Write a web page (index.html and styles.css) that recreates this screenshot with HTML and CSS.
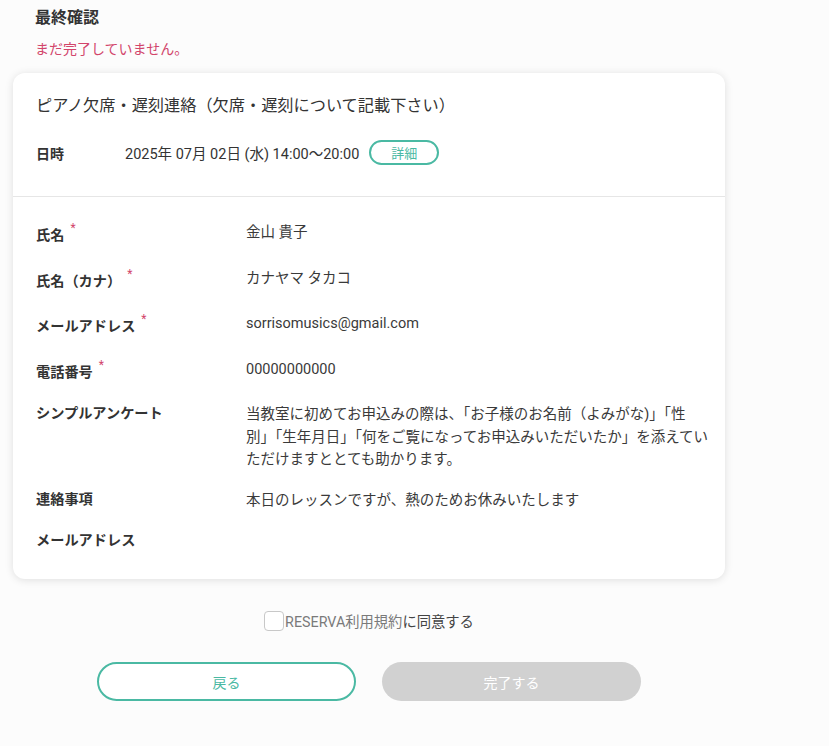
FILE: index.html
```html
<!DOCTYPE html>
<html lang="ja">
<head>
<meta charset="utf-8">
<link rel="stylesheet" href="styles.css">
</head>
<body>
<div class="page">
  <div class="intro">
    <h1 class="page-title">最終確認</h1>
    <p class="notice">まだ完了していません。</p>
  </div>
  <section class="card">
    <div class="card-head">
      <h2 class="event-title">ピアノ欠席・遅刻連絡（欠席・遅刻について記載下さい）</h2>
      <div class="when">
        <span class="when-label">日時</span>
        <span class="when-value">2025年 07月 02日 (水) 14:00〜20:00</span>
        <button class="detail-btn" type="button">詳細</button>
      </div>
    </div>
    <div class="card-body">
      <div class="row"><div class="label req">氏名<span class="star">*</span></div><div class="value">金山 貴子</div></div>
      <div class="row"><div class="label req">氏名（カナ）<span class="star">*</span></div><div class="value">カナヤマ タカコ</div></div>
      <div class="row"><div class="label req">メールアドレス<span class="star">*</span></div><div class="value">sorrisomusics@gmail.com</div></div>
      <div class="row"><div class="label req">電話番号<span class="star">*</span></div><div class="value">00000000000</div></div>
      <div class="row"><div class="label">シンプルアンケート</div><div class="value">当教室に初めてお申込みの際は、「お子様のお名前（よみがな)」「性<br>別」「生年月日」「何をご覧になってお申込みいただいたか」を添えていただけますととても助かります。</div></div>
      <div class="row"><div class="label">連絡事項</div><div class="value">本日のレッスンですが、熱のためお休みいたします</div></div>
      <div class="row"><div class="label">メールアドレス</div><div class="value"></div></div>
    </div>
  </section>
  <div class="agree">
    <span class="checkbox"></span>
    <span class="agree-text"><span class="terms">RESERVA利用規約</span>に同意する</span>
  </div>
  <div class="actions">
    <button class="btn btn-back" type="button">戻る</button>
    <button class="btn btn-done" type="button">完了する</button>
  </div>
</div>
</body>
</html>
```
FILE: styles.css
```css
* { box-sizing: border-box; }
html, body { margin: 0; padding: 0; }
body {
  background: #fcfcfc;
  font-family: "Roboto", "Noto Sans CJK JP", sans-serif;
  color: #333;
  font-size: 14px;
}
.page {
  width: 712px;
  margin-left: 13px;
  padding-top: 6px;
}
.intro { padding-left: 22px; }
.page-title {
  margin: 0;
  font-size: 16px;
  line-height: 24px;
  font-weight: 700;
  color: #333;
}
.notice {
  margin: 9px 0 0;
  font-size: 14px;
  line-height: 20px;
  color: #d2456b;
}
.card {
  margin-top: 14px;
  background: #fff;
  border-radius: 12px;
  box-shadow: 0 1px 8px rgba(0,0,0,0.12);
}
.card-head {
  padding: 21px 23px 31px;
  border-bottom: 1px solid #e6e6e6;
}
.event-title {
  margin: 0;
  font-size: 16.2px;
  line-height: 24px;
  font-weight: 400;
  color: #333;
}
.when {
  margin-top: 22px;
  display: flex;
  align-items: center;
  height: 25px;
}
.when-label {
  width: 89px;
  font-weight: 700;
  font-size: 14px;
}
.when-value { font-size: 14.5px; color: #333; }
.detail-btn {
  margin-left: 10px;
  width: 70px;
  height: 25px;
  border: 2px solid #4ab9a3;
  border-radius: 13px;
  background: #fff;
  color: #4ab9a3;
  font-family: inherit;
  font-size: 13px;
  padding: 0;
}
.card-body {
  padding: 23px 14px 28px 23px;
  display: flex;
  flex-direction: column;
  gap: 18.5px;
}
.row { display: flex; align-items: flex-start; }
.label {
  width: 210px;
  flex: none;
  font-weight: 700;
  line-height: 22px;
  font-size: 14.2px;
}
.label.req { padding-top: 4px; }
.star {
  color: #d2456b;
  font-weight: 400;
  font-size: 12px;
  position: relative;
  top: -8px;
  margin-left: 6px;
}
.value {
  flex: 1;
  line-height: 22.5px;
  min-height: 22px;
  padding-top: 2px;
  margin-bottom: -2px;
  color: #3a3a3a;
  font-size: 14.5px;
}
.agree {
  margin-top: 31px;
  display: flex;
  justify-content: center;
  align-items: center;
  gap: 1px;
}
.checkbox {
  width: 20px;
  height: 20px;
  border: 1px solid #c8c8c8;
  border-radius: 4px;
  background: #fff;
}
.agree-text { font-size: 14.3px; color: #444; }
.terms { color: #7a7a7a; }
.actions {
  margin-top: 31px;
  display: flex;
  justify-content: center;
  gap: 26px;
}
.btn {
  width: 259px;
  height: 39px;
  border-radius: 20px;
  font-family: inherit;
  font-size: 14px;
  padding: 0;
}
.btn-back {
  background: #fff;
  border: 2px solid #4ab9a3;
  color: #4ab9a3;
}
.btn-done {
  background: #d1d1d1;
  border: none;
  color: #fff;
}
```
